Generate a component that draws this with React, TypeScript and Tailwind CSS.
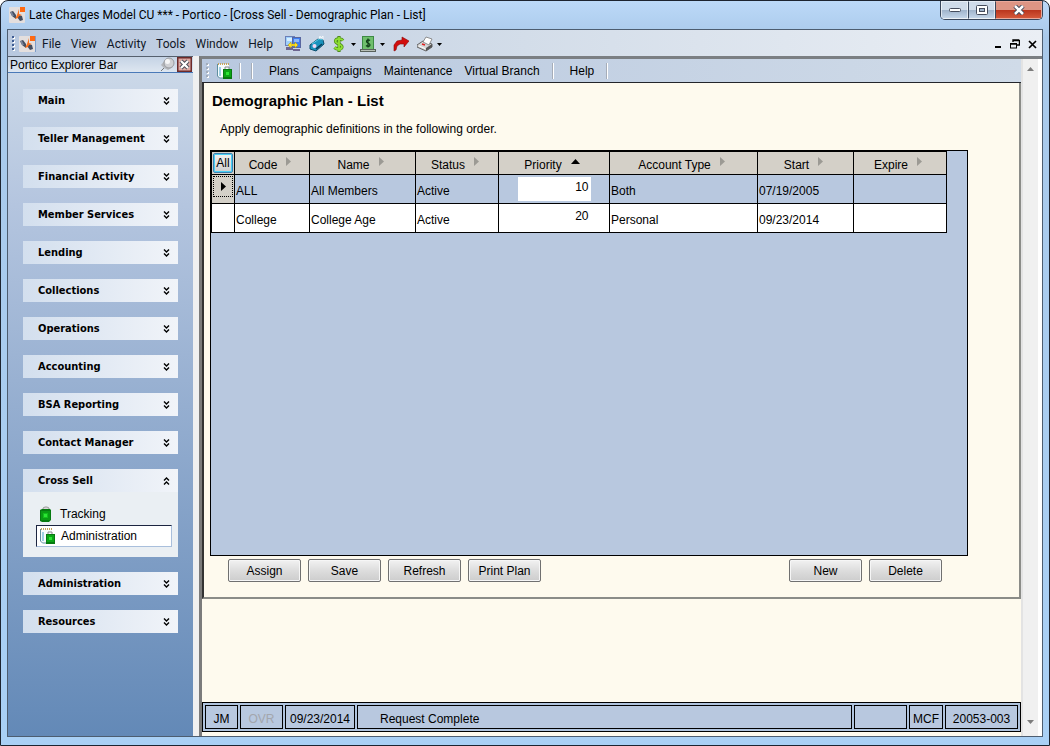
import React from 'react';

interface Section {
    title: string;
    items?: { label: string; selected?: boolean }[];
}

interface Plan {
    code: string;
    name: string;
    status: string;
    priority: number;
    accountType: string;
    start: string;
    expire: string;
}

const sections: Section[] = [
    { title: 'Main' },
    { title: 'Teller Management' },
    { title: 'Financial Activity' },
    { title: 'Member Services' },
    { title: 'Lending' },
    { title: 'Collections' },
    { title: 'Operations' },
    { title: 'Accounting' },
    { title: 'BSA Reporting' },
    { title: 'Contact Manager' },
    { title: 'Cross Sell', items: [{ label: 'Tracking' }, { label: 'Administration', selected: true }] },
    { title: 'Administration' },
    { title: 'Resources' },
];

const plans: Plan[] = [
    { code: 'ALL', name: 'All Members', status: 'Active', priority: 10, accountType: 'Both', start: '07/19/2005', expire: '' },
    { code: 'College', name: 'College Age', status: 'Active', priority: 20, accountType: 'Personal', start: '09/23/2014', expire: '' },
];

const columns = ['Code', 'Name', 'Status', 'Priority', 'Account Type', 'Start', 'Expire'];

function Logo() {
    return (
        <svg className="w-4 h-4 shrink-0" viewBox="0 0 16 16">
            <rect width="16" height="16" rx="1" fill="#e4dfde" />
            <path d="M1 5l3-1 3 4v4L3 9z" fill="#454e60" />
            <path d="M1 5l2 0 2 4-2 0z" fill="#79849a" />
            <path d="M10 8l3 1 1 4-3 1-3-4z" fill="#454e60" />
            <path d="M10 2v5l3 1-3 1-1 2-3 1 2-4z" fill="#f8701c" />
            <rect x="11" y="0" width="5" height="5" fill="#ff6a13" />
        </svg>
    );
}

function Bag() {
    return (
        <svg className="w-4 h-4 shrink-0" viewBox="0 0 16 16">
            <path d="M4 4V2l2-1h2l2 1v2" fill="#d8d8d8" stroke="#9a9a9a" />
            <path d="M1 4l2-1h8l1 1v10l-2 2H3l-2-1z" fill="#067a10" />
            <rect x="2" y="5" width="9" height="9" fill="#0a9c14" />
            <rect x="4" y="7" width="5" height="5" fill="#12bf1c" />
            <rect x="5" y="8" width="3" height="3" fill="#2ce534" />
        </svg>
    );
}

function NoteBag() {
    return (
        <svg className="w-4 h-4 shrink-0" viewBox="0 0 16 16">
            <path d="M1 1h11v14H3l-2-2z" fill="#f7fbfd" />
            <path d="M.5 1v12l2 2H6" fill="none" stroke="#5f8f9e" />
            <path d="M1 1h11" stroke="#c8a45a" strokeWidth="2" strokeDasharray="1 1" />
            <path d="M3 4v9" stroke="#9fd0e4" strokeWidth="2" />
            <path d="M8 6V4h4v2" fill="none" stroke="#888" />
            <rect x="6" y="6" width="9" height="10" fill="#067a10" />
            <rect x="7" y="7" width="7" height="7" fill="#0ba516" />
            <rect x="9" y="9" width="3" height="3" fill="#2ce534" />
        </svg>
    );
}

function Chevrons({ up }: { up?: boolean }) {
    return (
        <svg className={up ? 'w-[7px] h-2 rotate-180' : 'w-[7px] h-2'} viewBox="0 0 7 8" fill="none" stroke="#000" strokeWidth="1.4">
            <path d="M1 .5l2.500 2.500L6 .5M1 4.500L3.500 7 6 4.500" />
        </svg>
    );
}

function Grip({ light }: { light?: boolean }) {
    return (
        <svg className="w-[3px] h-4 shrink-0" viewBox="0 0 3 16">
            <path d="M2 1v15" stroke="#fff" strokeWidth="2" strokeDasharray="2 2" />
            <path d="M1 0v15" stroke={light ? '#a3adbb' : '#3f5c92'} strokeWidth="2" strokeDasharray="2 2" />
        </svg>
    );
}

function Caret() {
    return (
        <svg className="w-[5px] h-[3px] shrink-0" viewBox="0 0 5 3">
            <path d="M0 0h5L2.500 3z" fill="#000" />
        </svg>
    );
}

function Separator() {
    return <span className="w-0.5 h-4 shrink-0 border-l border-[#a6adb8] bg-white" />;
}

function TitleBar() {
    return (
        <header className="flex h-7 items-start justify-between pl-0.5">
            <div className="flex h-7 items-center gap-1">
                <Logo />
                <h1 className="font-['Roboto','Noto_Sans',sans-serif] text-[12px] whitespace-nowrap">
                    Late Charges Model CU *** - Portico - [Cross Sell - Demographic Plan - List]
                </h1>
            </div>
            <div className="flex h-[19px] overflow-hidden rounded-b-[5px] border border-t-0 border-[#39465a]">
                <button aria-label="Minimize" className="flex w-[27px] items-center justify-center border border-white/60 bg-linear-to-b from-[#cfdbe9] from-50% via-[#9fb3cb] via-50% to-[#c3d5e8]">
                    <svg className="w-3 h-1" viewBox="0 0 12 4"><rect x=".5" y=".5" width="11" height="3" rx="1" fill="#fff" stroke="#454c5c" /></svg>
                </button>
                <button aria-label="Restore" className="flex w-[27px] items-center justify-center border border-l-[#39465a] border-white/60 bg-linear-to-b from-[#cfdbe9] from-50% via-[#9fb3cb] via-50% to-[#c3d5e8]">
                    <svg className="w-3 h-2.5" viewBox="0 0 12 10"><rect x=".5" y=".5" width="11" height="9" rx="1" fill="#fff" stroke="#454c5c" /><rect x="3.500" y="3.500" width="5" height="3" fill="#9fb3cb" stroke="#454c5c" /></svg>
                </button>
                <button aria-label="Close" className="flex w-[47px] items-center justify-center border border-l-[#39465a] border-[#e9a99b] bg-linear-to-b from-[#dd9584] from-50% via-[#b9341c] via-50% to-[#d4583a]">
                    <svg className="w-3 h-2.5" viewBox="0 0 12 10"><path d="M2 1l8 8M10 1L2 9" stroke="#454c5c" strokeWidth="4.500" /><path d="M2 1l8 8M10 1L2 9" stroke="#fff" strokeWidth="2.500" /></svg>
                </button>
            </div>
        </header>
    );
}

function MenuBar() {
    return (
        <nav className="flex h-[26px] items-center bg-linear-to-r from-[#b8c8df] via-[#d3dde9] via-50% to-[#ebeff5] px-1 pt-0.5 text-[12px] font-['Roboto','Noto_Sans',sans-serif]">
            <Grip />
            <span className="ml-1 mr-1.5 flex border-r border-[#7d9cc9]"><Logo /></span>
            <div className="flex gap-2.5 text-[#111827]">
                <button>File</button>
                <button>View</button>
                <button>Activity</button>
                <button>Tools</button>
                <button>Window</button>
                <button>Help</button>
            </div>
            <div className="ml-3 flex items-center gap-2">
                <button aria-label="Connections">
                    <svg className="w-4 h-4" viewBox="0 0 16 16">
                        <rect x=".5" y=".5" width="9" height="9" fill="#9fd0fb" stroke="#6a7fb8" />
                        <rect x="7.500" y="1.500" width="8" height="10" fill="#3f7df0" stroke="#5967a0" />
                        <path d="M2 2h5v3H2z" fill="#d8efff" />
                        <path d="M9 3h5v3H9z" fill="#8ab8fb" />
                        <path d="M1 11h7v3H1zM8 13h7v2H8z" fill="#6d6690" />
                        <path d="M3 9l3-3v2h4V6l3 3-3 3v-2H6v2z" fill="#ffe21f" stroke="#a88a10" strokeWidth=".5" />
                    </svg>
                </button>
                <button aria-label="Tag">
                    <svg className="w-4 h-4" viewBox="0 0 16 16">
                        <path d="M1 9l8-6 5 1 1 4-8 7-6-2z" fill="#1a93bd" stroke="#0b4d6c" />
                        <path d="M3 8l7-5 4 1" fill="none" stroke="#58cdea" />
                        <circle cx="5.500" cy="10" r="2" fill="#f3d6f2" />
                        <path d="M10 3l1-3 1 2 2-2v3" fill="none" stroke="#f2f7fa" />
                        <path d="M7 13l6-5" stroke="#083c59" strokeWidth="1.500" />
                    </svg>
                </button>
                <button aria-label="Money" className="flex items-center gap-1.5">
                    <svg className="w-3 h-4" viewBox="0 0 12 16" fill="none">
                        <path d="M10 4.500C8.500 2.500 3 2 2.500 5S9.500 8 9 11s-5.500 2.500-7.500.5M6 0v16" stroke="#4c8a1a" strokeWidth="3.200" />
                        <path d="M10 4.500C8.500 2.500 3 2 2.500 5S9.500 8 9 11s-5.500 2.500-7.500.5M6 1v14" stroke="#8fe034" strokeWidth="1.800" />
                    </svg>
                    <Caret />
                </button>
                <button aria-label="Cash drawer" className="-ml-1 flex items-center gap-1">
                    <svg className="w-4 h-4" viewBox="0 0 16 16" fill="none">
                        <rect x="2.500" y=".5" width="11" height="13" fill="#6fbf6d" stroke="#3d8a45" />
                        <path d="M10 4.500C9 3.500 6.500 3.500 6.500 5.500S10 7 10 9s-3 1.500-4 .5M8 2.500v9" stroke="#0d3a15" strokeWidth="1.200" />
                        <rect x=".5" y="13.500" width="15" height="2" fill="#b8c0b8" stroke="#59625c" />
                    </svg>
                    <Caret />
                </button>
                <button aria-label="Forward">
                    <svg className="w-4 h-4" viewBox="0 0 16 16">
                        <path d="M1 15V9l3-4 5-1V1l7 4-5 6V8H7l-3 2-1 4z" fill="#d30d0d" stroke="#8a0606" strokeWidth=".6" />
                    </svg>
                </button>
                <button aria-label="Print" className="flex items-center gap-1">
                    <svg className="w-4 h-4" viewBox="0 0 16 16">
                        <path d="M0 9l6-4 9 3v3l-6 4-9-4z" fill="#d6d6d6" stroke="#555" strokeWidth=".9" />
                        <path d="M6 6l3-5 6 2-3 6z" fill="#fff" stroke="#777" strokeWidth=".8" />
                        <path d="M9 12l6-4v3l-6 4z" fill="#555" />
                        <path d="M2 10l6 2.500" stroke="#fff" />
                        <path d="M5 8l3 1" stroke="#e02020" strokeWidth="1.500" />
                    </svg>
                    <Caret />
                </button>
            </div>
            <div className="ml-auto flex items-center gap-2">
                <button aria-label="Minimize document">
                    <svg className="w-2 h-2.5" viewBox="0 0 8 10"><path d="M1 8h6" stroke="#000" strokeWidth="2" /></svg>
                </button>
                <button aria-label="Restore document">
                    <svg className="w-2.5 h-2.5" viewBox="0 0 10 10" fill="none" stroke="#000">
                        <path d="M3 3V1h6M3 1.500h6.500V6H7M.5 5h6" strokeWidth="1.400" />
                        <rect x=".5" y="4.500" width="6" height="4.500" />
                    </svg>
                </button>
                <button aria-label="Close document">
                    <svg className="w-2.5 h-2.5" viewBox="0 0 10 10"><path d="M1 2l7 7M8 2L1 9" stroke="#000" strokeWidth="1.700" /></svg>
                </button>
            </div>
        </nav>
    );
}

function ExplorerBar() {
    return (
        <aside className="flex w-[185px] shrink-0 flex-col">
            <div className="flex h-[17px] items-center justify-between border-y border-t-[#56606e] border-b-[#4a7ab8] bg-linear-to-b from-[#c5d3e5] to-[#dde6f0] pl-0.5 pr-px">
                <h2>Portico Explorer Bar</h2>
                <div className="flex items-center gap-0.5">
                    <button aria-label="Pin">
                        <svg className="w-[15px] h-[15px]" viewBox="0 0 15 15">
                            <path d="M1 14l4-4" stroke="#777" />
                            <path d="M1 8l5-6 7 8-5 3-4-2z" fill="#b4b6ba" />
                            <circle cx="9" cy="6" r="5" fill="#d0d1d4" stroke="#9a9ca1" />
                            <circle cx="7.500" cy="4.500" r="2.500" fill="#f6f6f6" />
                        </svg>
                    </button>
                    <button aria-label="Close explorer bar">
                        <svg className="w-[15px] h-[15px]" viewBox="0 0 15 15">
                            <rect x=".75" y=".75" width="13.500" height="13.500" fill="#dfa9a3" stroke="#6b2a2a" strokeWidth="1.500" />
                            <path d="M4 4l7 7M11 4l-7 7" stroke="#4c4c58" strokeWidth="4.200" />
                            <path d="M4 4l7 7M11 4l-7 7" stroke="#fff" strokeWidth="2.200" />
                        </svg>
                    </button>
                </div>
            </div>
            <div className="flex flex-1 flex-col gap-[15px] bg-linear-to-b from-[#cbd8e8] via-[#b4c5df] via-20% to-[#6389b7] px-[15px] py-4">
                {sections.map((section) => (
                    <section key={section.title}>
                        <button className="flex h-[23px] w-full items-center justify-between bg-linear-to-r from-[#d3dfee] to-[#f1f4f9] pl-[15px] pr-2 font-['DejaVu_Sans_Condensed','DejaVu_Sans',sans-serif] text-[11px] font-bold">
                            {section.title}
                            <Chevrons up={!!section.items} />
                        </button>
                        {section.items && (
                            <ul className="bg-[#eaeff3] pt-2.5 pr-1.5 pb-2.5 pl-[13px]">
                                {section.items.map((item) => (
                                    <li key={item.label}>
                                        <a
                                            href="#"
                                            className={
                                                item.selected
                                                    ? 'flex h-[22px] items-center gap-[5px] border border-t-[#1c2540] border-r-[#a9bfdc] border-b-[#a9bfdc] border-l-[#1c2540] bg-white pl-[3px]'
                                                    : 'flex h-[23px] items-center gap-[5px] border border-transparent pl-0.5'
                                            }
                                        >
                                            {item.selected ? <NoteBag /> : <Bag />}
                                            {item.label}
                                        </a>
                                    </li>
                                ))}
                            </ul>
                        )}
                    </section>
                ))}
            </div>
        </aside>
    );
}

function FormButton({ children }: { children: React.ReactNode }) {
    return (
        <button className="h-[23px] min-w-[73px] rounded-xs border border-[#707070] bg-linear-to-b from-[#f2f2f2] from-0% via-[#dddddd] via-50% to-[#cdcdcd] px-2 pt-px shadow-[inset_0_0_0_1px_#f6f6f6]">
            {children}
        </button>
    );
}

function PlanGrid() {
    return (
        <div className="h-[406px] border border-black bg-[#b8c8df]">
            <table className="table-fixed border-collapse border border-[#696969] text-left">
                <colgroup>
                    <col className="w-[23px]" />
                    <col className="w-[75px]" />
                    <col className="w-[106px]" />
                    <col className="w-[83px]" />
                    <col className="w-[111px]" />
                    <col className="w-[148px]" />
                    <col className="w-[96px]" />
                    <col className="w-[93px]" />
                </colgroup>
                <thead>
                    <tr className="h-[23px] bg-[#d4d0c8]">
                        <th className="border border-black p-0 font-normal">
                            <button className="mx-auto block h-5 w-5 rounded-xs border border-[#3c7fb1] bg-linear-to-b from-[#f2f2f2] to-[#cfcfcf] shadow-[inset_0_0_0_1px_#48d0f5]">All</button>
                        </th>
                        {columns.map((column) => (
                            <th key={column} className="border border-black p-0 font-normal">
                                <button className="flex w-full items-center justify-center gap-[9px] pt-1 pr-1">
                                    {column}
                                    {column === 'Priority' ? (
                                        <svg className="mb-2 w-[9px] h-[5px]" viewBox="0 0 9 5"><path d="M0 5l4.500-5L9 5z" fill="#000" /></svg>
                                    ) : (
                                        <svg className="mb-2 w-[5px] h-[9px]" viewBox="0 0 5 9"><path d="M0 0l5 4.500L0 9z" fill="#9c9a94" /></svg>
                                    )}
                                </button>
                            </th>
                        ))}
                    </tr>
                </thead>
                <tbody>
                    {plans.map((plan, i) => (
                        <tr key={plan.code} className={i === 0 ? 'h-[29px] bg-[#b8c8df]' : 'h-[29px] bg-white'}>
                            <td className={i === 0 ? 'border border-black bg-[#d4d0c8] p-0 align-top' : 'border border-black p-0'}>
                                {i === 0 && (
                                    <div className="mx-px mt-px flex h-[21px] items-center justify-center border border-dotted border-black">
                                        <svg className="w-[5px] h-[9px]" viewBox="0 0 5 9"><path d="M0 0l5 4.500L0 9z" fill="#000" /></svg>
                                    </div>
                                )}
                            </td>
                            <td className="border border-black px-px pt-1 pb-0">{plan.code}</td>
                            <td className="border border-black px-px pt-1 pb-0">{plan.name}</td>
                            <td className="border border-black px-px pt-1 pb-0">{plan.status}</td>
                            <td className="border border-black p-0">
                                <input
                                    aria-label={`Priority for ${plan.name}`}
                                    defaultValue={plan.priority}
                                    className="mx-auto block h-6 w-[73px] bg-white pr-0.5 pb-1 text-right outline-none"
                                />
                            </td>
                            <td className="border border-black px-px pt-1 pb-0">{plan.accountType}</td>
                            <td className="border border-black px-px pt-1 pb-0">{plan.start}</td>
                            <td className="border border-black px-px pt-1 pb-0">{plan.expire}</td>
                        </tr>
                    ))}
                </tbody>
            </table>
        </div>
    );
}

function StatusBar() {
    return (
        <footer className="flex h-[30px] shrink-0 gap-0.5 border border-black bg-[#b0c4de] p-0.5 *:flex *:items-center *:justify-center *:border *:border-black *:bg-[#b8c8df] *:pt-1">
            <span className="w-[33px]">JM</span>
            <span className="w-[43px] text-[#a3a6ad]">OVR</span>
            <span className="w-[70px]">09/23/2014</span>
            <span className="flex-1 justify-start! pl-[22px]">Request Complete</span>
            <span className="w-[53px]" />
            <span className="w-[34px]">MCF</span>
            <span className="w-[73px]">20053-003</span>
        </footer>
    );
}

export default function App() {
    return (
        <div className="flex min-h-screen flex-col rounded-t-lg border border-[#1d2430] bg-linear-to-b from-[#bcd9f8] via-[#a9c9ea] via-5% to-[#a9d0f5] px-1.5 pb-2 font-['Liberation_Sans',Arial,sans-serif] text-[12px] leading-4 text-black">
            <TitleBar />
            <div className="flex flex-1 flex-col border border-[#4d5d70] bg-[#f0f0f0]">
                <MenuBar />
                <div className="flex flex-1">
                    <ExplorerBar />
                    <div className="ml-1.5 flex flex-1 border-t-[3px] border-l-[3px] border-t-[#7b7f83] border-l-[#7b7b7b] bg-[#fefaee]">
                        <main className="flex min-w-0 flex-1 flex-col pb-1">
                            <nav className="flex h-6 items-center border-b border-[#23252b] bg-linear-to-r from-[#b8c8df] to-[#d0dbe8] pt-px pl-1">
                                <Grip light />
                                <button aria-label="Cross Sell" className="mr-1.5 ml-2"><NoteBag /></button>
                                <Separator />
                                <span className="w-2.5" />
                                <Separator />
                                <div className="mr-3 ml-4 flex gap-3">
                                    <button>Plans</button>
                                    <button>Campaigns</button>
                                    <button>Maintenance</button>
                                    <button>Virtual Branch</button>
                                </div>
                                <Separator />
                                <button className="mr-3 ml-4">Help</button>
                                <Separator />
                            </nav>
                            <section className="border-r-2 border-b-2 border-l-2 border-r-[#8b8c88] border-b-[#8b8c88] border-l-[#333] px-1.5 pb-[15px]">
                                <h2 className="pt-2.5 pl-0.5 text-[15px] leading-4 font-bold">Demographic Plan - List</h2>
                                <p className="pt-3 pb-[13px] pl-2.5">Apply demographic definitions in the following order.</p>
                                <div className="mr-[45px]">
                                    <PlanGrid />
                                    <div className="flex items-center justify-between pt-[3px] pr-[26px] pl-[18px]">
                                        <div className="flex gap-[7px]">
                                            <FormButton>Assign</FormButton>
                                            <FormButton>Save</FormButton>
                                            <FormButton>Refresh</FormButton>
                                            <FormButton>Print Plan</FormButton>
                                        </div>
                                        <div className="flex gap-[7px]">
                                            <FormButton>New</FormButton>
                                            <FormButton>Delete</FormButton>
                                        </div>
                                    </div>
                                </div>
                            </section>
                            <div className="flex-1" />
                            <StatusBar />
                        </main>
                        <div className="flex w-[21px] flex-col items-center justify-between border-r-4 border-l-2 border-r-white border-l-[#e3e3e3] bg-[#f0f0f0] pt-2 pb-3">
                            <svg className="w-[7px] h-1" viewBox="0 0 7 4"><path d="M0 4l3.500-4L7 4z" fill="#7c7c7c" /></svg>
                            <svg className="w-[7px] h-1" viewBox="0 0 7 4"><path d="M0 0h7L3.500 4z" fill="#7c7c7c" /></svg>
                        </div>
                    </div>
                </div>
            </div>
        </div>
    );
}
